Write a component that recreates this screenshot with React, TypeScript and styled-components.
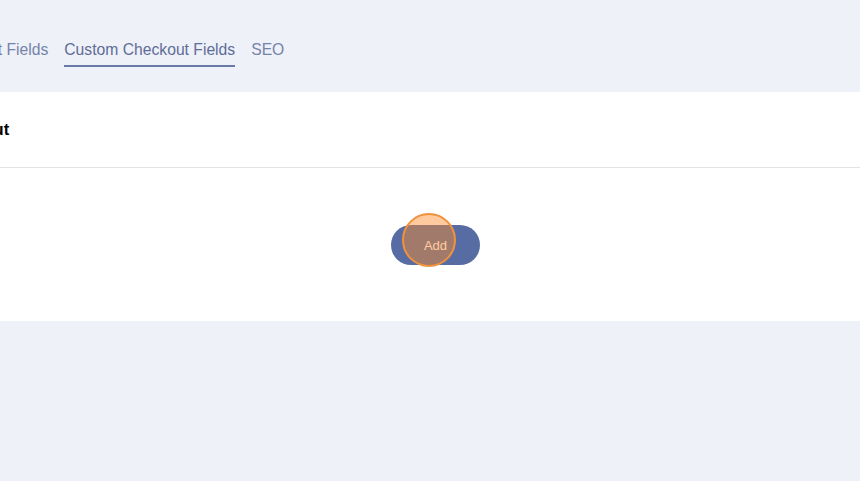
import React from 'react';
import styled, { createGlobalStyle } from 'styled-components';

const GlobalStyle = createGlobalStyle`
  html, body {
    margin: 0;
    padding: 0;
    background: #eef1f8;
    font-family: "Liberation Sans", Arial, sans-serif;
    overflow: hidden;
  }
`;

// page is scrolled sideways in the capture, so the content starts left of the viewport
const Page = styled.div`
  width: 860px;
  height: 481px;
  overflow: hidden;
  background: #eef1f8;
`;

const TabBar = styled.nav`
  display: flex;
  align-items: flex-start;
  gap: 16px;
  height: 92px;
  box-sizing: border-box;
  padding-top: 41px;
  margin-left: -52px;
`;

const Tab = styled.div<{ active?: boolean }>`
  font-size: 15.7px;
  line-height: 18px;
  color: ${(props) => (props.active ? '#5e6d97' : '#7583a9')};
  padding-bottom: 6px;
  border-bottom: 2px solid ${(props) => (props.active ? '#6a7aa6' : 'transparent')};
  white-space: nowrap;
`;

const Panel = styled.section`
  background: #ffffff;
  height: 229px;
  display: flex;
  flex-direction: column;
`;

const PanelHeader = styled.div`
  height: 76px;
  box-sizing: border-box;
  border-bottom: 1px solid #e2e2e2;
  display: flex;
  align-items: center;
  margin-left: -132px;
`;

const Title = styled.h2`
  margin: 0;
  font-size: 16.5px;
  font-weight: 700;
  color: #000000;
`;

const PanelBody = styled.div`
  flex: 1;
  display: flex;
  align-items: center;
  justify-content: flex-start;
  padding-left: 391px;
`;

const ButtonWrap = styled.div`
  position: relative;
`;

const AddButton = styled.button`
  width: 89px;
  height: 40px;
  padding: 2px 0 0;
  border: none;
  border-radius: 20px;
  background: #566ca3;
  color: #ffffff;
  font-family: "Liberation Sans", Arial, sans-serif;
  font-size: 13px;
  cursor: pointer;
`;

const ClickMarker = styled.span`
  position: absolute;
  left: 11px;
  top: -12px;
  width: 50px;
  height: 50px;
  border-radius: 50%;
  border: 2.5px solid #f0923c;
  background: rgba(255, 140, 40, 0.45);
  pointer-events: none;
`;

const App = () => {
  return (
    <Page>
      <GlobalStyle />
      <TabBar>
        <Tab>Product Fields</Tab>
        <Tab active>Custom Checkout Fields</Tab>
        <Tab>SEO</Tab>
      </TabBar>
      <Panel>
        <PanelHeader>
          <Title>Custom Checkout</Title>
        </PanelHeader>
        <PanelBody>
          <ButtonWrap>
            <AddButton>Add</AddButton>
            <ClickMarker />
          </ButtonWrap>
        </PanelBody>
      </Panel>
    </Page>
  );
};

export default App;
